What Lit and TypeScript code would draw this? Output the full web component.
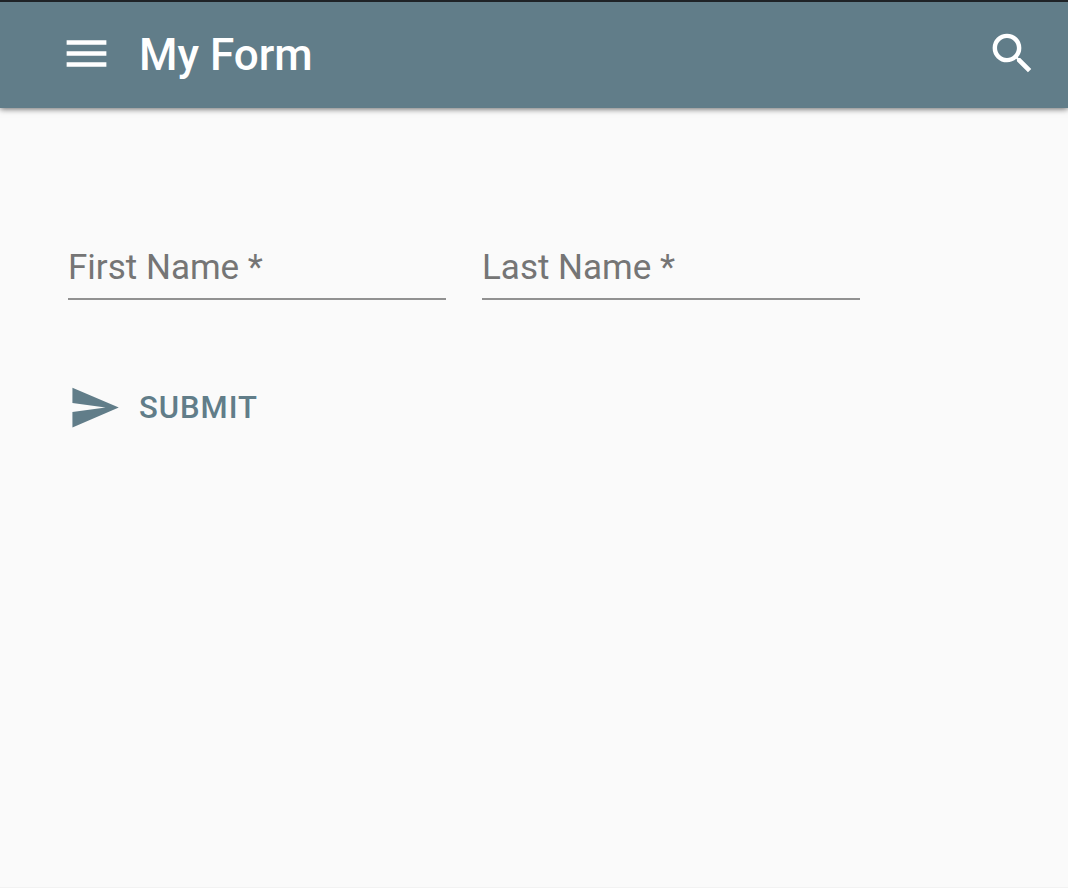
import { LitElement, html, css, svg } from "lit";
import { customElement, property } from "lit/decorators.js";

const ICONS: Record<string, string> = {
  menu: "M3 18h18v-2H3v2zm0-5h18v-2H3v2zm0-7v2h18V6H3z",
  search:
    "M15.5 14h-.79l-.28-.27A6.471 6.471 0 0 0 16 9.5 6.5 6.5 0 1 0 9.5 16c1.61 0 3.09-.59 4.23-1.57l.27.28v.79l5 4.99L20.49 19l-4.99-5zm-6 0C7.01 14 5 11.99 5 9.5S7.01 5 9.5 5 14 7.01 14 9.5 11.99 14 9.5 14z",
  send: "M2.01 21L23 12 2.01 3 2 10l15 2-15 2z",
};

@customElement("md-icon")
class MdIcon extends LitElement {
  @property() name = "menu";

  static styles = css`
    :host {
      display: block;
      width: 53px;
      height: 53px;
    }
    .glyph {
      display: block;
      width: 100%;
      height: 100%;
      fill: currentColor;
    }
  `;

  render() {
    return html`<svg class="glyph" viewBox="0 0 24 24" aria-hidden="true">
      ${svg`<path d=${ICONS[this.name]}></path>`}
    </svg>`;
  }
}

@customElement("md-text-field")
class MdTextField extends LitElement {
  @property() label = "";
  @property() name = "";

  static styles = css`
    :host {
      display: block;
      min-width: 0;
    }
    .field {
      display: grid;
      border-bottom: 2px solid #919191;
    }
    .field > * {
      grid-area: 1 / 1;
    }
    .label {
      color: #757575;
      font-size: 35px;
      line-height: 60px;
      white-space: nowrap;
      pointer-events: none;
    }
    .input {
      box-sizing: border-box;
      width: 100%;
      min-width: 0;
      height: 60px;
      padding: 0;
      border: 0;
      outline: 0;
      background: transparent;
      color: #212121;
      font: inherit;
      font-size: 35px;
    }
    .input:not(:placeholder-shown) + .label {
      visibility: hidden;
    }
  `;

  render() {
    return html`<div class="field">
      <input class="input" id="control" name=${this.name} type="text" placeholder=" " required />
      <label class="label" for="control">${this.label} *</label>
    </div>`;
  }
}

@customElement("app-root")
class AppRoot extends LitElement {
  static styles = css`
    :host {
      display: flex;
      flex-direction: column;
      box-sizing: border-box;
      min-height: 100vh;
      border-bottom: 1px solid #f2f2f2;
      background: #fafafa;
      font-family: Roboto, sans-serif;
    }
    .toolbar {
      display: flex;
      align-items: flex-start;
      box-sizing: border-box;
      height: 108px;
      padding: 25px 29px 0 60px;
      border-top: 2px solid #1f2327;
      background: #617d89;
      color: #ffffff;
      box-shadow: 0 1px 6px rgba(0, 0, 0, 0.6);
    }
    .title {
      flex: 1;
      margin: 0 0 0 26px;
      font-size: 44px;
      font-weight: 500;
      line-height: 56px;
    }
    .icon-button {
      padding: 0;
      border: 0;
      background: none;
      color: inherit;
      cursor: pointer;
    }
    .form {
      display: flex;
      flex-direction: column;
      align-items: flex-start;
      gap: 81px;
      padding: 130px 68px;
    }
    .fields {
      display: grid;
      grid-template-columns: 1fr 1fr;
      gap: 36px;
      width: 100%;
      max-width: 792px;
    }
    .submit {
      display: flex;
      align-items: center;
      gap: 18px;
      padding: 0;
      border: 0;
      background: none;
      color: #617d89;
      font: inherit;
      font-size: 31px;
      font-weight: 500;
      letter-spacing: 1px;
      line-height: 36px;
      text-transform: uppercase;
      cursor: pointer;
    }
  `;

  render() {
    return html`
      <header class="toolbar">
        <button class="icon-button" type="button" aria-label="Menu">
          <md-icon name="menu"></md-icon>
        </button>
        <h1 class="title">My Form</h1>
        <button class="icon-button" type="button" aria-label="Search">
          <md-icon name="search"></md-icon>
        </button>
      </header>
      <main>
        <form class="form" @submit=${(e: Event) => e.preventDefault()}>
          <div class="fields">
            <md-text-field label="First Name" name="firstName"></md-text-field>
            <md-text-field label="Last Name" name="lastName"></md-text-field>
          </div>
          <button class="submit" type="submit">
            <md-icon name="send"></md-icon>
            <span>Submit</span>
          </button>
        </form>
      </main>
    `;
  }
}
